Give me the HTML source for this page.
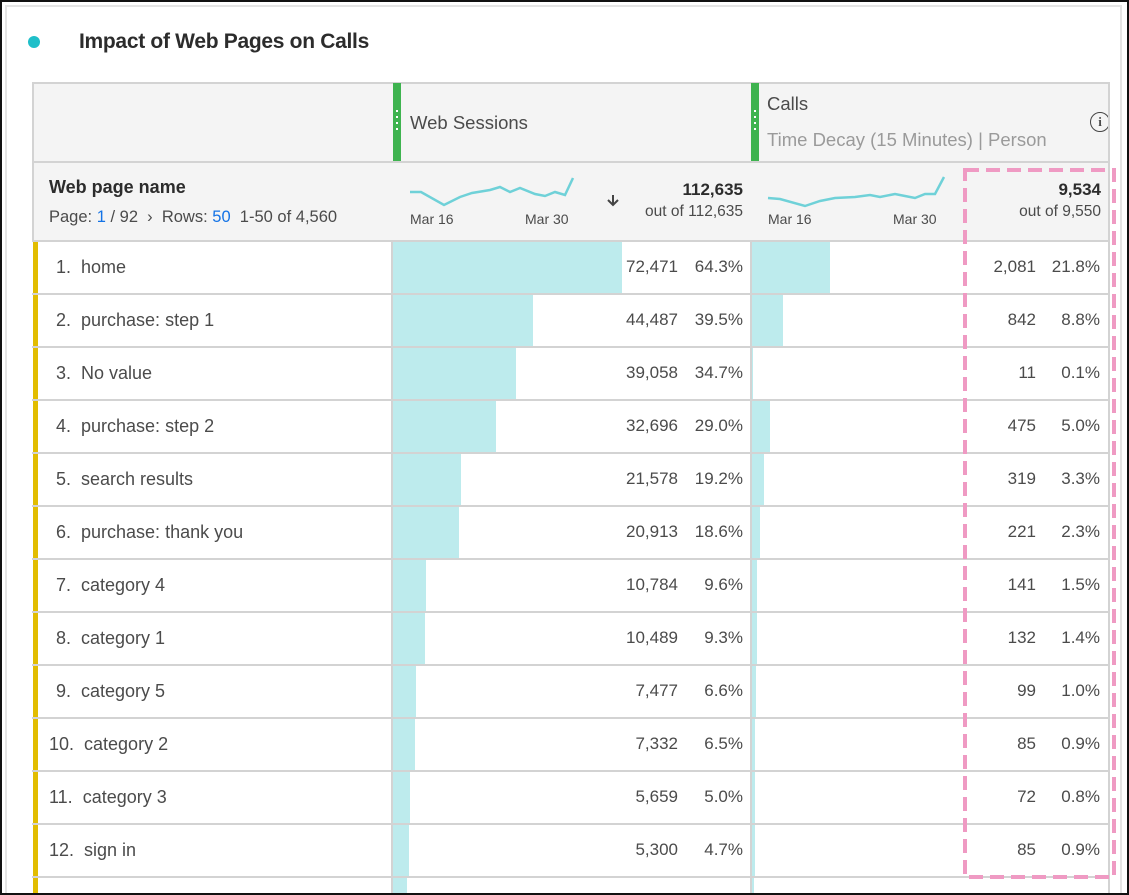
<!DOCTYPE html>
<html style="overflow:hidden;height:895px"><head><meta charset="utf-8"><style>
*{margin:0;padding:0;box-sizing:border-box}
body{width:1129px;height:895px;overflow:hidden;background:#fff;font-family:"Liberation Sans",sans-serif;color:#4b4b4b;position:relative}
.frame{position:absolute;left:0;top:0;width:1129px;height:895px;border:2px solid #111;z-index:5;pointer-events:none}
.inner{position:absolute;left:5px;top:5px;width:1117px;height:890px;border:2px solid #e4e4e4;border-bottom:none}
.abs{position:absolute}
.row{position:absolute;left:32px;width:1077px;height:53px;border-bottom:2px solid #d3d3d3;background:#fff;overflow:hidden}
.row .y{position:absolute;left:1px;top:0;width:5px;height:53px;background:#e2bd00}
.row .n{position:absolute;left:24px;top:15px;font-size:18px;white-space:nowrap}
.row .wb{position:absolute;left:360px;top:0;height:51px;background:#bdebed}
.row .cb{position:absolute;left:720px;top:0;height:51px;background:#bdebed}
.row .v1,.row .p1,.row .v2,.row .p2{position:absolute;top:15px;font-size:17px}
.row .v1{right:431px}.row .p1{right:366px}.row .v2{right:73px}.row .p2{right:9px}
.vl{position:absolute;top:82px;width:2px;height:813px;background:#d3d3d3}
</style></head><body>
<div class="inner"></div>
<div class="abs" style="left:28px;top:36px;width:12px;height:12px;border-radius:50%;background:#1fbfc9"></div>
<div class="abs" style="left:79px;top:30px;font-size:21px;font-weight:bold;color:#2c2c2c;letter-spacing:-0.3px">Impact of Web Pages on Calls</div>
<div class="abs" style="left:32px;top:82px;width:1078px;height:160px;background:#f4f4f4;border:2px solid #d3d3d3"></div>
<div class="abs" style="left:32px;top:161px;width:1078px;height:2px;background:#d3d3d3"></div>
<div class="abs" style="left:393px;top:83px;width:8px;height:78px;background:#3eb34f"></div>
<div class="abs" style="left:751px;top:83px;width:8px;height:78px;background:#3eb34f"></div>
<div class="abs" style="left:396px;top:110px;width:2px;height:24px;background:repeating-linear-gradient(#fff 0 2px,transparent 2px 6px)"></div>
<div class="abs" style="left:754px;top:110px;width:2px;height:24px;background:repeating-linear-gradient(#fff 0 2px,transparent 2px 6px)"></div>
<div class="abs" style="left:410px;top:112px;font-size:18.5px">Web Sessions</div>
<div class="abs" style="left:767px;top:93px;font-size:18.5px">Calls</div>
<div class="abs" style="left:767px;top:129px;font-size:18.5px;color:#9a9a9a">Time Decay (15 Minutes) | Person</div>
<div class="abs" style="left:1090px;top:112px;width:20px;height:20px;border:1.5px solid #444;border-radius:50%;font-size:13px;font-weight:bold;text-align:center;line-height:17px;font-family:'Liberation Serif',serif;clip-path:inset(0 2px 0 0)">i</div>
<div class="abs" style="left:49px;top:177px;font-size:18px;font-weight:bold;color:#2c2c2c">Web page name</div>
<div class="abs" style="left:49px;top:208px;font-size:16.5px;white-space:nowrap;width:342px;overflow:hidden">Page: <span style="color:#1473e6">1</span> / 92 &nbsp;›&nbsp; Rows: <span style="color:#1473e6">50</span> &nbsp;1-50 of 4,560</div>
<svg class="abs" style="left:0;top:0" width="1129" height="260">
<polyline fill="none" stroke="#6fd1d8" stroke-width="2.5" points="410,192 421,192 444,205 460,197 472,193 490,190 500,187 510,192 520,188 535,194 545,196 555,192 565,195 573,178"/>
<polyline fill="none" stroke="#6fd1d8" stroke-width="2.5" points="768,198 780,199 805,206 820,201 835,198 855,197 870,195 880,197 895,194 905,196 915,198 925,194 935,194 944,177"/>
<path d="M613,195 v10 M608,200 l5,5 l5,-5" fill="none" stroke="#444" stroke-width="2"/>
</svg>
<div class="abs" style="left:410px;top:211px;font-size:14px">Mar 16</div>
<div class="abs" style="left:525px;top:211px;font-size:14px">Mar 30</div>
<div class="abs" style="left:768px;top:211px;font-size:14px">Mar 16</div>
<div class="abs" style="left:893px;top:211px;font-size:14px">Mar 30</div>
<div class="abs" style="right:386px;top:180px;font-size:17px;font-weight:bold;color:#2c2c2c">112,635</div>
<div class="abs" style="right:386px;top:203px;font-size:15.5px">out of 112,635</div>
<div class="abs" style="right:28px;top:180px;font-size:17px;font-weight:bold;color:#2c2c2c">9,534</div>
<div class="abs" style="right:28px;top:203px;font-size:15.5px">out of 9,550</div>

<div class="row" style="top:242px"><div class="y"></div><div class="wb" style="width:230px"></div><div class="cb" style="width:78px"></div><div class="n">1.&nbsp; home</div><div class="v1">72,471</div><div class="p1">64.3%</div><div class="v2">2,081</div><div class="p2">21.8%</div></div>
<div class="row" style="top:295px"><div class="y"></div><div class="wb" style="width:141px"></div><div class="cb" style="width:31px"></div><div class="n">2.&nbsp; purchase: step 1</div><div class="v1">44,487</div><div class="p1">39.5%</div><div class="v2">842</div><div class="p2">8.8%</div></div>
<div class="row" style="top:348px"><div class="y"></div><div class="wb" style="width:124px"></div><div class="cb" style="width:1px"></div><div class="n">3.&nbsp; No value</div><div class="v1">39,058</div><div class="p1">34.7%</div><div class="v2">11</div><div class="p2">0.1%</div></div>
<div class="row" style="top:401px"><div class="y"></div><div class="wb" style="width:104px"></div><div class="cb" style="width:18px"></div><div class="n">4.&nbsp; purchase: step 2</div><div class="v1">32,696</div><div class="p1">29.0%</div><div class="v2">475</div><div class="p2">5.0%</div></div>
<div class="row" style="top:454px"><div class="y"></div><div class="wb" style="width:69px"></div><div class="cb" style="width:12px"></div><div class="n">5.&nbsp; search results</div><div class="v1">21,578</div><div class="p1">19.2%</div><div class="v2">319</div><div class="p2">3.3%</div></div>
<div class="row" style="top:507px"><div class="y"></div><div class="wb" style="width:67px"></div><div class="cb" style="width:8px"></div><div class="n">6.&nbsp; purchase: thank you</div><div class="v1">20,913</div><div class="p1">18.6%</div><div class="v2">221</div><div class="p2">2.3%</div></div>
<div class="row" style="top:560px"><div class="y"></div><div class="wb" style="width:34px"></div><div class="cb" style="width:5px"></div><div class="n">7.&nbsp; category 4</div><div class="v1">10,784</div><div class="p1">9.6%</div><div class="v2">141</div><div class="p2">1.5%</div></div>
<div class="row" style="top:613px"><div class="y"></div><div class="wb" style="width:33px"></div><div class="cb" style="width:5px"></div><div class="n">8.&nbsp; category 1</div><div class="v1">10,489</div><div class="p1">9.3%</div><div class="v2">132</div><div class="p2">1.4%</div></div>
<div class="row" style="top:666px"><div class="y"></div><div class="wb" style="width:24px"></div><div class="cb" style="width:4px"></div><div class="n">9.&nbsp; category 5</div><div class="v1">7,477</div><div class="p1">6.6%</div><div class="v2">99</div><div class="p2">1.0%</div></div>
<div class="row" style="top:719px"><div class="y"></div><div class="wb" style="width:23px"></div><div class="cb" style="width:3px"></div><div class="n" style="left:17px">10.&nbsp; category 2</div><div class="v1">7,332</div><div class="p1">6.5%</div><div class="v2">85</div><div class="p2">0.9%</div></div>
<div class="row" style="top:772px"><div class="y"></div><div class="wb" style="width:18px"></div><div class="cb" style="width:3px"></div><div class="n" style="left:17px">11.&nbsp; category 3</div><div class="v1">5,659</div><div class="p1">5.0%</div><div class="v2">72</div><div class="p2">0.8%</div></div>
<div class="row" style="top:825px"><div class="y"></div><div class="wb" style="width:17px"></div><div class="cb" style="width:3px"></div><div class="n" style="left:17px">12.&nbsp; sign in</div><div class="v1">5,300</div><div class="p1">4.7%</div><div class="v2">85</div><div class="p2">0.9%</div></div>
<div class="row" style="top:878px;height:17px;border:none"><div class="y"></div><div class="wb" style="width:15px"></div><div class="cb" style="width:2px"></div></div>

<div class="vl" style="left:391px;top:242px;height:653px"></div>
<div class="vl" style="left:750px;top:242px;height:653px"></div>
<div class="vl" style="left:1108px;top:82px"></div>
<div class="vl" style="left:32px;top:82px;height:160px"></div>

<svg class="abs" style="left:0;top:0" width="1129" height="895">
<rect x="965" y="170" width="149" height="707" fill="none" stroke="#ef9ac3" stroke-width="4" stroke-dasharray="14,7"/>
</svg>
<div class="frame"></div>
</body></html>
